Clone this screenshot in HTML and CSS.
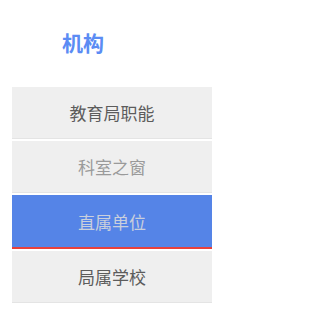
FILE: index.html
```html
<!DOCTYPE html>
<html lang="zh">
<head>
<meta charset="utf-8">
<link rel="stylesheet" href="styles.css">
</head>
<body>
<div class="page">
  <div class="header"><span class="title">机构</span></div>
  <ul class="menu">
    <li class="item">教育局职能</li>
    <li class="item muted">科室之窗</li>
    <li class="item active">直属单位</li>
    <li class="item">局属学校</li>
  </ul>
</div>
</body>
</html>
```

FILE: styles.css
```css
html, body {
  margin: 0;
  padding: 0;
  background: #ffffff;
}
.page {
  width: 224px;
  font-family: "Noto Sans CJK SC", "Noto Sans", sans-serif;
}
.header {
  height: 87px;
  display: flex;
  align-items: flex-start;
  padding-left: 62px;
  box-sizing: border-box;
  padding-top: 28px;
}
.title {
  font-size: 21px;
  line-height: 28px;
  font-weight: bold;
  color: #5b8cf4;
}
.menu {
  list-style: none;
  margin: 0 12px;
  padding: 0;
  display: flex;
  flex-direction: column;
  gap: 2px;
}
.item {
  height: 51px;
  border-bottom: 1px solid #e4e4e4;
  background: #efefef;
  display: flex;
  align-items: center;
  justify-content: center;
  font-size: 17px;
  color: #5c5c5c;
}
.item.muted {
  color: #9a9a9a;
}
.item.active {
  height: 52px;
  background: #5584e7;
  border-bottom: 2px solid #e8413b;
  color: #c9cfdc;
}
```
